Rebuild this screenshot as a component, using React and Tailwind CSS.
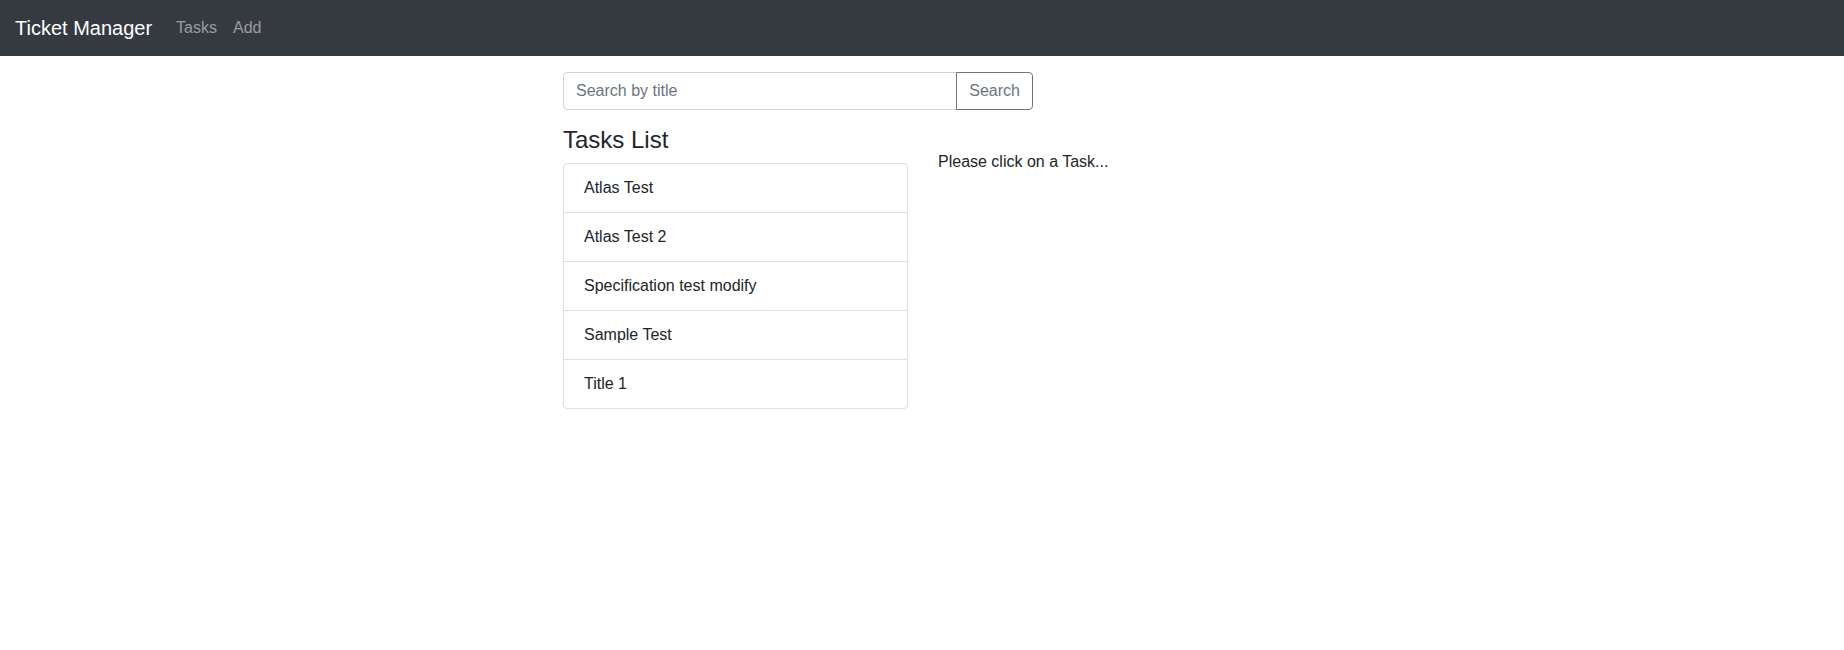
import React from "react";

const tasks = [
  "Atlas Test",
  "Atlas Test 2",
  "Specification test modify",
  "Sample Test",
  "Title 1",
];

export default function App() {
  return (
    <div className="min-h-[650px] bg-white text-[#212529] text-base leading-6 font-['Liberation_Sans',Arial,sans-serif]">
      {/* Navbar */}
      <nav className="flex items-center bg-[#343a40] px-[15px] py-2">
        <a className="mr-4 py-[5px] text-[20px] leading-[30px] text-white whitespace-nowrap">
          Ticket Manager
        </a>
        <div className="flex">
          <a className="px-2 py-2 text-white/50">Tasks</a>
          <a className="px-2 py-2 text-white/50">Add</a>
        </div>
      </nav>

      {/* Main */}
      <div className="mt-4">
        <div className="mx-auto flex w-[752px] flex-wrap pl-[2px]">
          <div className="w-[500px] px-[15px]">
            <div className="mb-4 flex">
              <input
                type="text"
                placeholder="Search by title"
                className="h-[38px] flex-1 min-w-0 rounded-l-[4px] border border-[#ced4da] px-3 py-1.5 text-base text-[#495057] placeholder:text-[#6c757d] outline-none"
              />
              <button className="-ml-px h-[38px] rounded-r-[4px] border border-[#6c757d] px-3 text-base text-[#6c757d]">
                Search
              </button>
            </div>
          </div>

          <div className="w-[375px] px-[15px]">
            <h4 className="mb-2 text-[24px] leading-[28.8px] font-medium">Tasks List</h4>
            <ul className="flex flex-col rounded-[4px] border border-[#dfdfdf]">
              {tasks.map((t, i) => (
                <li
                  key={t}
                  className={
                    i === 0
                      ? "px-5 py-3"
                      : "border-t border-[#dfdfdf] px-5 py-3"
                  }
                >
                  {t}
                </li>
              ))}
            </ul>
          </div>

          <div className="w-[375px] px-[15px]">
            <br />
            <p>Please click on a Task...</p>
          </div>
        </div>
      </div>
    </div>
  );
}
